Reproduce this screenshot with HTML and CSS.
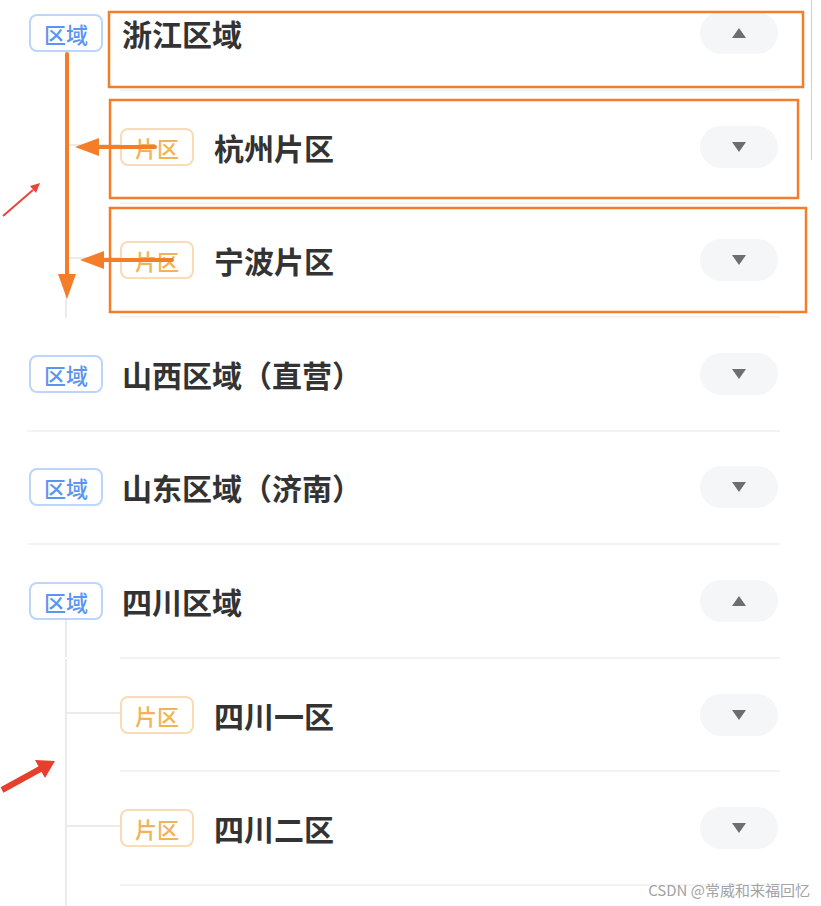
FILE: index.html
```html
<!DOCTYPE html>
<html lang="zh-CN">
<head>
<meta charset="utf-8">
<title>区域列表</title>
<link rel="stylesheet" href="styles.css">
</head>
<body>
<div class="page">
  <div class="list">
    <section class="group expanded">
      <div class="row head">
        <div class="badge-col"><span class="spacer"></span><span class="badge region">区域</span><span class="tail"></span></div>
        <div class="main"><span class="title">浙江区域</span><span class="toggle"><i class="tri up"></i></span></div>
      </div>
      <div class="children">
        <div class="row child"><span class="conn"></span><div class="main"><span class="badge zone">片区</span><span class="title">杭州片区</span><span class="toggle"><i class="tri down"></i></span></div></div>
        <div class="row child"><span class="conn"></span><div class="main"><span class="badge zone">片区</span><span class="title">宁波片区</span><span class="toggle"><i class="tri down"></i></span></div></div>
      </div>
    </section>
    <section class="group">
      <div class="row head">
        <div class="badge-col"><span class="spacer"></span><span class="badge region">区域</span><span class="tail"></span></div>
        <div class="main"><span class="title">山西区域（直营）</span><span class="toggle"><i class="tri down"></i></span></div>
      </div>
    </section>
    <section class="group">
      <div class="row head">
        <div class="badge-col"><span class="spacer"></span><span class="badge region">区域</span><span class="tail"></span></div>
        <div class="main"><span class="title">山东区域（济南）</span><span class="toggle"><i class="tri down"></i></span></div>
      </div>
    </section>
    <section class="group expanded">
      <div class="row head">
        <div class="badge-col"><span class="spacer"></span><span class="badge region">区域</span><span class="tail"></span></div>
        <div class="main"><span class="title">四川区域</span><span class="toggle"><i class="tri up"></i></span></div>
      </div>
      <div class="children more">
        <div class="row child"><span class="conn"></span><div class="main"><span class="badge zone">片区</span><span class="title">四川一区</span><span class="toggle"><i class="tri down"></i></span></div></div>
        <div class="row child"><span class="conn"></span><div class="main"><span class="badge zone">片区</span><span class="title">四川二区</span><span class="toggle"><i class="tri down"></i></span></div></div>
      </div>
    </section>
  </div>

  <svg class="annot" width="821" height="906" viewBox="0 0 821 906" xmlns="http://www.w3.org/2000/svg">
    <line x1="811.5" y1="0" x2="811.5" y2="160" stroke="#cfcfcf" stroke-width="1"/>
    <g fill="none" stroke="#f47d2a" stroke-width="2.5">
      <rect x="109" y="12" width="694" height="75"/>
      <rect x="110" y="100" width="688" height="98"/>
      <rect x="110" y="208" width="696" height="104"/>
    </g>
    <g stroke="#f47d2a" stroke-width="4" stroke-linecap="round">
      <line x1="67" y1="54" x2="67" y2="278"/>
      <line x1="155" y1="147" x2="95" y2="147"/>
      <line x1="172" y1="260" x2="100" y2="260"/>
    </g>
    <g fill="#f47d2a">
      <polygon points="58,274 76,274 67,299"/>
      <polygon points="75,147 99,138 99,156"/>
      <polygon points="80,260 104,251 104,269"/>
    </g>
    <line x1="3" y1="216" x2="33" y2="190" stroke="#e8463a" stroke-width="2"/>
    <polygon points="40,183 36,193 30,186" fill="#e8463a"/>
    <line x1="2" y1="790" x2="42" y2="768" stroke="#e63f2e" stroke-width="6"/>
    <polygon points="55,761 45,778 35,760" fill="#e63f2e"/>
  </svg>
  <div class="watermark">CSDN @常威和来福回忆</div>
</div>
</body>
</html>
```
FILE: styles.css
```css
html, body {
  margin: 0;
  padding: 0;
  background: #ffffff;
}

body {
  font-family: "Noto Sans CJK SC", "Noto Sans", sans-serif;
  color: #333333;
  overflow: hidden;
}

.page {
  position: relative;
  width: 821px;
  height: 906px;
  overflow: hidden;
}

.list {
  margin-top: -22.8px;
  padding: 0 41px 0 27px;
}

.row {
  display: flex;
  height: 113.6px;
  box-sizing: border-box;
}

.badge-col {
  width: 93px;
  flex: none;
  display: flex;
  flex-direction: column;
  align-items: flex-start;
  padding-left: 2px;
  box-sizing: border-box;
  border-bottom: 2px solid #f3f3f3;
}

.group.expanded .badge-col {
  border-bottom-color: transparent;
}

.spacer {
  flex: 1;
}

.tail {
  flex: 1;
  width: 2px;
  margin-left: 36px;
}

.group.expanded .tail {
  background: #ebebeb;
}

.main {
  flex: 1;
  display: flex;
  align-items: center;
  border-bottom: 2px solid #f3f3f3;
}

.head .main {
  padding-left: 2px;
}

.badge {
  flex: none;
  width: 74px;
  height: 38px;
  box-sizing: border-box;
  border-radius: 8px;
  display: flex;
  align-items: center;
  justify-content: center;
  font-size: 22px;
  font-weight: 500;
  background: #ffffff;
}

.badge.region {
  color: #5b95f0;
  border: 2px solid #bcd5fa;
}

.badge.zone {
  color: #f2b257;
  border: 2px solid #f9dcb6;
}

.title {
  font-size: 30px;
  font-weight: 700;
  color: #333333;
  line-height: 1;
}

.child .title {
  margin-left: 20px;
}

.toggle {
  margin-left: auto;
  margin-right: 2px;
  width: 78px;
  height: 42px;
  border-radius: 21px;
  background: #f5f6f8;
  display: flex;
  align-items: center;
  justify-content: center;
  flex: none;
}

.tri {
  display: block;
  width: 0;
  height: 0;
  border-left: 7px solid transparent;
  border-right: 7px solid transparent;
}

.tri.down {
  border-top: 10px solid #6e6e6e;
}

.tri.up {
  border-bottom: 10px solid #6e6e6e;
}

.children {
  margin-left: 38px;
  border-left: 2px solid #ebebeb;
}

.children.more {
  padding-bottom: 40px;
}

.conn {
  flex: none;
  width: 53px;
  height: 2px;
  background: #ebebeb;
  align-self: center;
  margin-bottom: 6px;
}

.annot {
  position: absolute;
  left: 0;
  top: 0;
  pointer-events: none;
}

.watermark {
  position: absolute;
  right: 11px;
  bottom: 6px;
  font-family: "Noto Sans CJK SC", "Liberation Sans", sans-serif;
  font-size: 15px;
  color: #a3a3a3;
  line-height: 20px;
  text-shadow: 0 0 2px #ffffff;
}
```
